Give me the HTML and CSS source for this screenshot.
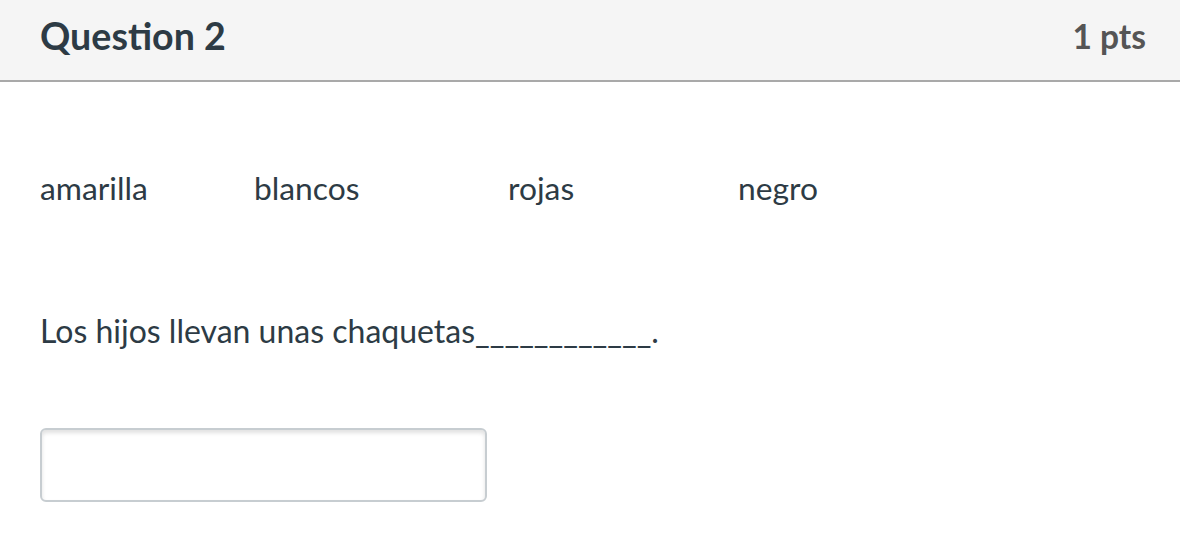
FILE: index.html
```html
<!DOCTYPE html>
<html>
<head>
<meta charset="utf-8">
<link rel="stylesheet" href="styles.css">
</head>
<body>
<div class="question">
  <div class="header">
    <h2 class="title">Question 2</h2>
    <div class="pts">1 pts</div>
  </div>
  <div class="content">
    <div class="words">
      <span>amarilla</span>
      <span>blancos</span>
      <span>rojas</span>
      <span>negro</span>
    </div>
    <p class="sentence">Los hijos llevan unas chaquetas____________.</p>
    <input class="answer" type="text">
  </div>
</div>
</body>
</html>
```
FILE: styles.css
```css
html, body {
  margin: 0;
  padding: 0;
  background: #fff;
}
body {
  font-family: Lato, "Liberation Sans", sans-serif;
  color: #2d3b45;
}
.header {
  height: 82px;
  box-sizing: border-box;
  background: #f5f5f5;
  border-bottom: 2px solid #a9a9a9;
  display: flex;
  justify-content: space-between;
  align-items: center;
  padding: 0 34px 9px 40px;
}
.title {
  margin: 0;
  font-size: 37.6px;
  font-weight: 700;
  color: #2d3b45;
}
.pts {
  font-size: 33.5px;
  font-weight: 700;
  color: #555;
}
.content {
  padding: 0 40px;
}
.words {
  display: grid;
  grid-template-columns: 214px 254px 230px auto;
  font-size: 31.8px;
  margin-top: 86px;
  line-height: 40px;
}
.sentence {
  font-size: 32px;
  line-height: 40px;
  margin: 103px 0 0;
}
.answer {
  display: block;
  margin-top: 77px;
  width: 447px;
  height: 74px;
  box-sizing: border-box;
  border: 2px solid #c7cdd1;
  border-radius: 6px;
  box-shadow: inset 0 3px 4px rgba(0,0,0,0.12);
  background: #fff;
}
```
